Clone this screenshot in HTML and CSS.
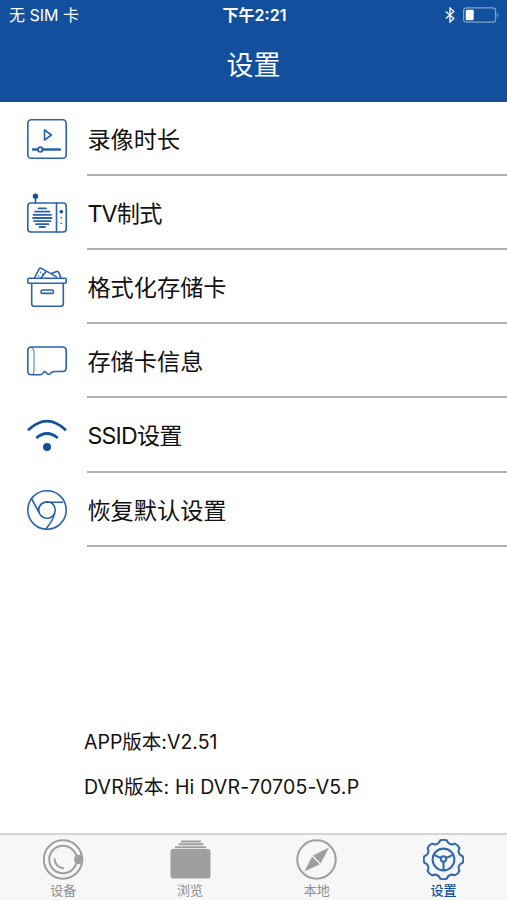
FILE: index.html
```html
<!DOCTYPE html>
<html lang="zh-CN">
<head>
  <meta charset="UTF-8">
  <meta name="viewport" content="width=device-width, initial-scale=1">
  <title>设置</title>
  <link rel="stylesheet" href="styles.css">
</head>
<body>

  <header>
    <div class="status-bar">
      <span class="carrier">无 SIM 卡</span>
      <span class="time">下午2:21</span>
      <span class="status-icons">
        <svg class="bluetooth" viewBox="0 0 10 16"><path d="M.8 4.4l8 7.2L5 15V1l3.8 3.4-8 7.2"/></svg>
        <svg class="battery" viewBox="0 0 37 16">
          <rect class="shell" x=".6" y=".8" width="32" height="14.4" rx="2.8"/>
          <rect class="level" x="2.7" y="2.8" width="8" height="10.4" rx="1"/>
          <path class="level cap" d="M34.2 5.4q2.2 2.6 0 5.2z"/>
        </svg>
      </span>
    </div>
    <h1>设置</h1>
  </header>

  <main>
    <ul class="menu">
      <li>
        <svg class="icon" viewBox="0 0 40 40">
          <rect x=".8" y=".8" width="38.4" height="38.4" rx="3.5"/>
          <path d="M17.5 11v10l7-5z"/>
          <path class="thick" d="M6 30.5h5M15.5 30.5H33"/>
          <circle cx="13.3" cy="30.5" r="2.4"/>
        </svg>
        <span>录像时长</span>
      </li>
      <li>
        <svg class="icon" viewBox="0 0 40 40">
          <rect x=".8" y="10" width="38.4" height="29" rx="3"/>
          <path d="M8.5 3v7M29.5 10v29"/>
          <circle class="solid" cx="8.5" cy="3.3" r="2.7"/>
          <path class="grille" d="M11.5 15.4h7.500M8 18.600h14.500M6.500 21.800h17.500M6 25h18.500M7 28.200h16.500M9 31.200h12.500M12.500 34h5.500"/>
          <circle class="solid" cx="34.3" cy="18.7" r="1.8"/>
          <circle class="solid" cx="34.3" cy="24.8" r=".8"/>
          <circle class="solid" cx="34.3" cy="30.3" r=".8"/>
        </svg>
        <span class="tight">TV制式</span>
      </li>
      <li>
        <svg class="icon" viewBox="0 0 40 40">
          <rect x=".8" y="11.3" width="38.4" height="5" rx="1"/>
          <path d="M4.7 16.5V37q0 2.2 2.2 2.2h27.2q2.2 0 2.2-2.2V16.5"/>
          <rect x="14" y="23" width="12.5" height="3.4" rx="1.4"/>
          <path d="M7.5 11L12 2.2q1-1.5 2.5-.8l15 8.5M19 4.5L14 11M24.5 6.5l5-2q1.5-.5 2.3 1L34 11"/>
          <path d="M13.5 5.2h.1M11.5 9h.1M15.5 7h.1"/>
        </svg>
        <span>格式化存储卡</span>
      </li>
      <li>
        <svg class="icon" viewBox="0 0 40 40">
          <path d="M4 6H35.5Q39.2 6 39.2 9.7V26.5Q39.2 30.5 35.5 30.5H27.5Q25 30.5 23.5 32.5Q22 34 20.5 32.8L18.5 31Q17.3 30 16.5 31.5Q15.5 33.7 13 33.7H4.5Q.8 33.7.8 30V9.7Q.8 6 4.5 6Z"/>
          <path class="fine" d="M4.5 6.5q2.5 1 2.5 4V30q0 2-1 3.5"/>
        </svg>
        <span>存储卡信息</span>
      </li>
      <li>
        <svg class="icon" viewBox="0 0 40 40">
          <path class="wave" d="M1 14.2Q20-4 39 14.2M9.3 22q10.7-9 21.4 0"/>
          <circle class="solid" cx="20" cy="31" r="4"/>
        </svg>
        <span class="tight">SSID设置</span>
      </li>
      <li>
        <svg class="icon" viewBox="0 0 40 40">
          <circle cx="20" cy="20" r="19.2"/>
          <circle cx="20" cy="20" r="8.3"/>
          <path d="M4.5 8.5L12 22.5M35.5 12.3H20q-6.5 0-8.5 6.5M27.5 23.5Q26.5 30 18.8 39"/>
        </svg>
        <span>恢复默认设置</span>
      </li>
    </ul>

    <div class="versions">
      <p>APP版本:V2.51</p>
      <p class="dvr">DVR版本: Hi DVR-70705-V5.P</p>
    </div>
  </main>

  <nav class="tabs">
    <a class="tab">
      <svg class="tab-icon" viewBox="0 0 41 41">
        <circle cx="20" cy="20.5" r="19.2"/>
        <circle cx="20" cy="20.5" r="13.8"/>
        <path d="M11.5 19.5q.5 8.500 9.500 10"/>
        <circle class="solid" cx="35.7" cy="20.5" r="4.7"/>
      </svg>
      <span>设备</span>
    </a>
    <a class="tab">
      <svg class="tab-icon" viewBox="0 0 41 41">
        <path class="stack" d="M11 2.5h20M8.5 5.3h25M5 8.2h31"/>
        <rect class="solid" x=".5" y="10" width="40" height="29.5" rx="2.5"/>
      </svg>
      <span>浏览</span>
    </a>
    <a class="tab">
      <svg class="tab-icon" viewBox="0 0 41 41">
        <circle cx="20.5" cy="20.5" r="19.2"/>
        <path class="solid" d="M33 8.5L24.8 24.2 17 16.4zM16 17.5l7.8 7.8L8.5 32.5z"/>
      </svg>
      <span>本地</span>
    </a>
    <a class="tab active">
      <svg class="tab-icon" viewBox="0 0 40 40">
        <path d="M16.800 1.300Q20 0 23.200 1.300C24.500 5 27.500 6.200 31 4.500Q34.200 5.800 35.500 9C33.800 12.500 35 15.500 38.700 16.800Q40 20 38.700 23.200C35 24.500 33.800 27.500 35.500 31Q34.200 34.200 31 35.500C27.500 33.800 24.500 35 23.200 38.700Q20 40 16.800 38.700C15.500 35 12.500 33.800 9 35.500Q5.800 34.200 4.500 31C6.200 27.500 5 24.500 1.300 23.200Q0 20 1.300 16.800C5 15.500 6.200 12.500 4.500 9Q5.800 5.800 9 4.500C12.500 6.200 15.500 5 16.800 1.300z"/>
        <circle cx="20" cy="20" r="10.6"/>
        <circle cx="20" cy="19.5" r="2.6"/>
        <path d="M10.5 15.5l7 3M29.5 15.500l-7 3M20 22.500v8"/>
      </svg>
      <span>设置</span>
    </a>
  </nav>

</body>
</html>
```

FILE: styles.css
```css
* {
  box-sizing: border-box;
}

body {
  display: flex;
  flex-direction: column;
  height: 900px;
  margin: 0;
  background-color: #fff;
  color: #111;
  font-family: Inter, "Noto Sans CJK SC", sans-serif;
  overflow: hidden;
}

svg {
  display: block;
  fill: none;
}

header {
  height: 101.5px;
  background-color: #12509e;
  color: #fff;
}

.status-bar {
  display: grid;
  grid-template-columns: 1fr auto 1fr;
  align-items: center;
  height: 30px;
  padding: 0 7px 0 9px;
  font-size: 16px;
  line-height: 29px;
}

.time {
  font-weight: 600;
}

.status-icons {
  display: flex;
  justify-content: flex-end;
  align-items: center;
  gap: 8px;
}

.bluetooth {
  width: 10px;
  height: 16px;
  stroke: #fff;
  stroke-width: 1.3;
}

.battery {
  width: 37px;
  height: 16px;
}

.shell {
  stroke: #7ea3d0;
  stroke-width: 1.2;
}

.level {
  fill: #fff;
}

.cap {
  fill: #7ea3d0;
}

h1 {
  margin: 0;
  font-size: 27px;
  font-weight: 400;
  line-height: 72px;
  text-align: center;
}

main {
  flex: 1;
}

.menu {
  margin: 0;
  padding: 0.6px 0 0 27.4px;
  list-style: none;
}

.menu li {
  display: flex;
  align-items: center;
  gap: 20px;
  height: 74.1px;
  font-size: 23.2px;
}

.menu span {
  flex: 1;
  height: 100%;
  border-bottom: 2px solid #b0b0b0;
  line-height: 76px;
  white-space: nowrap;
}

.menu .tight {
  letter-spacing: -0.8px;
}

.icon {
  width: 40px;
  height: 40px;
  stroke: #2a62ab;
  stroke-width: 1.6;
  stroke-linecap: round;
  stroke-linejoin: round;
}

.icon .solid {
  fill: #12509e;
  stroke: none;
}

.icon .thick {
  stroke-width: 2.4;
}

.icon .grille {
  stroke-width: 1.8;
}

.icon .fine {
  stroke-width: 0.9;
}

.icon .wave {
  stroke: #12509e;
  stroke-width: 2.8;
  stroke-linecap: butt;
}

.versions {
  padding: 173.5px 0 0 84px;
  font-size: 19.5px;
}

.versions p {
  margin: 0;
  line-height: 44.5px;
}

.versions .dvr {
  letter-spacing: 0.2px;
}

.tabs {
  display: grid;
  grid-template-columns: repeat(4, 1fr);
  height: 67px;
  border-top: 2px solid #d5d5d5;
  background-color: #f7f7f7;
}

.tab {
  display: flex;
  flex-direction: column;
  align-items: center;
  padding-top: 4px;
  color: #8e8e8e;
  font-size: 13px;
  line-height: 20px;
}

.tab-icon {
  width: 41px;
  height: 41px;
  stroke: #9f9f9f;
  stroke-width: 2;
}

.tab-icon .solid {
  fill: #9f9f9f;
  stroke: none;
}

.tab.active {
  color: #12509e;
  font-weight: 500;
}

.active .tab-icon {
  stroke: #3069b0;
}
```
